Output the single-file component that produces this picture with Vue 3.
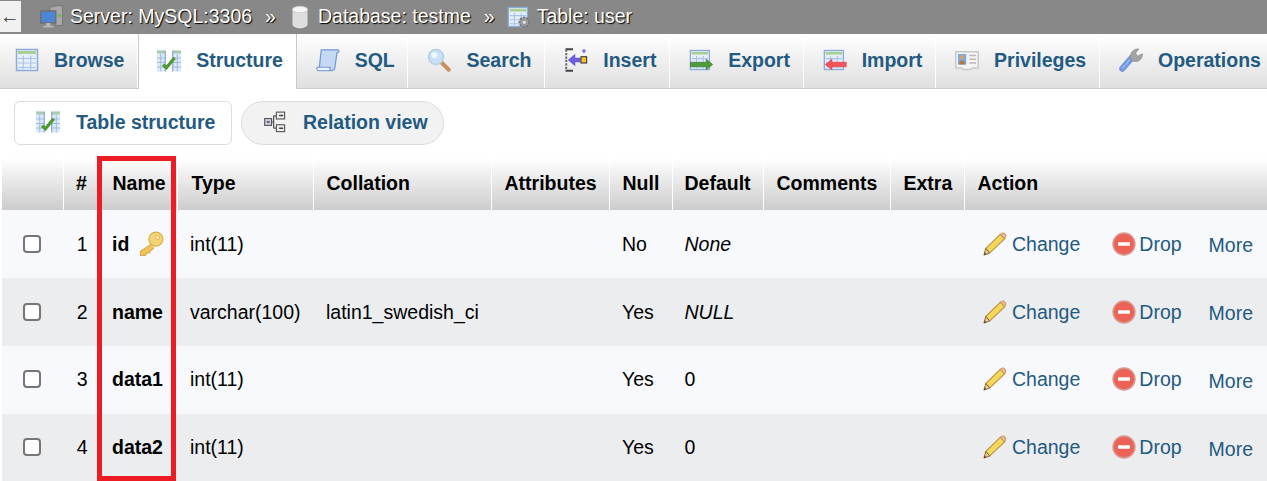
<script setup>
const tabs = [
  { label: 'Browse', icon: 'browse' },
  { label: 'Structure', icon: 'structure', active: true },
  { label: 'SQL', icon: 'sql' },
  { label: 'Search', icon: 'search' },
  { label: 'Insert', icon: 'insert' },
  { label: 'Export', icon: 'export' },
  { label: 'Import', icon: 'import' },
  { label: 'Privileges', icon: 'privileges' },
  { label: 'Operations', icon: 'wrench' }
]

const columns = ['', '#', 'Name', 'Type', 'Collation', 'Attributes', 'Null', 'Default', 'Comments', 'Extra', 'Action']

const rows = [
  { n: 1, name: 'id', primary: true, type: 'int(11)', collation: '', nul: 'No', def: 'None', italic: true },
  { n: 2, name: 'name', type: 'varchar(100)', collation: 'latin1_swedish_ci', nul: 'Yes', def: 'NULL', italic: true },
  { n: 3, name: 'data1', type: 'int(11)', collation: '', nul: 'Yes', def: '0' },
  { n: 4, name: 'data2', type: 'int(11)', collation: '', nul: 'Yes', def: '0' }
]
</script>

<template>
  <div class="page">
    <!-- icon sprite -->
    <svg class="sprite" width="0" height="0">
      <defs>
        <symbol id="i-table" viewBox="0 0 16 16">
          <rect x="1" y="1" width="14" height="14" fill="#e6eefa" stroke="#8cadd9" />
          <rect x="2" y="2" width="12" height="2" fill="#a9cf92" />
          <path d="M2 7h12M2 10h12M2 13h12M5.5 5v9M10.500 5v9" stroke="#a9c3e6" stroke-width=".8" fill="none" />
        </symbol>
        <symbol id="i-browse" viewBox="0 0 16 16">
          <use href="#i-table" width="16" height="16" />
        </symbol>
        <symbol id="i-structure" viewBox="0 0 16 16">
          <path d="M0 1h5.500v14H0zM10.500 1H16v14h-5.500z" fill="#dfeaf8" />
          <path d="M0 1h5.500v2H0zM10.500 1H16v2h-5.500z" fill="#a9cbb0" />
          <path d="M0 6h5.500M0 9h5.500M0 12h5.500M10.500 6H16M10.500 9H16M10.500 12H16M2.500 3v12M13.500 3v12" stroke="#9dbbe2" stroke-width=".7" />
          <path d="M5.500 1v14M10.500 1v14" stroke="#8cadd9" stroke-width=".9" />
          <path d="M4 10.500 6.300 12.500 11.800 5.800" fill="none" stroke="#4f9a2f" stroke-width="2.200" />
        </symbol>
        <symbol id="i-sql" viewBox="0 0 16 16">
          <path d="M3.500 1.200H14.500c1 0 1.300 1.800-.5 2L12.500 13.500c-.2 1-1 1.500-2 1.500H2z" fill="#c5d9f5" stroke="#6f97d0" stroke-width=".8" />
          <path d="M1.500 15.200c-1-.4-1.200-1.500-.8-2.400H9.500c-.4 1-.2 1.900.6 2.400z" fill="#eef4fc" stroke="#6f97d0" stroke-width=".7" />
        </symbol>
        <symbol id="i-search" viewBox="0 0 16 16">
          <path d="m9.500 9.500 5 5" stroke="#c8925c" stroke-width="2.600" stroke-linecap="round" />
          <circle cx="6" cy="6" r="5" fill="#c9e0f7" stroke="#b5cde2" />
          <circle cx="4.800" cy="4.600" r="2" fill="#eef6fd" />
        </symbol>
        <symbol id="i-insert" viewBox="0 0 16 16">
          <path d="M1 .8h5M1 15.200h5" stroke="#444" stroke-width="1.300" />
          <path d="M1.500 1v14" stroke="#666" stroke-width="1.300" stroke-dasharray="1.500 .8" />
          <path d="M2.500 8 7.500 3.800v2.700H11v3H7.500v2.700z" fill="#6a5fd8" />
          <rect x="11.300" y="5.800" width="3.800" height="4.200" fill="#f2c230" stroke="#333" stroke-width=".7" />
          <path d="M12 2h2.600M13.300 .7v2.600" stroke="#7a70e0" stroke-width="1" />
        </symbol>
        <symbol id="i-export" viewBox="0 0 16 16">
          <use href="#i-table" width="14.500" height="16" />
          <path d="M1 9.500h10.500V7.500L15.800 11l-4.300 3.500v-2H1z" fill="#4f9a3a" stroke="#3a7a2b" stroke-width=".4" />
        </symbol>
        <symbol id="i-import" viewBox="0 0 16 16">
          <use href="#i-table" width="14.500" height="16" />
          <path d="M15.500 9.500H6V7.500L1.500 11 6 14.500v-2h9.500z" fill="#f0545a" stroke="#e03a40" stroke-width=".4" />
        </symbol>
        <symbol id="i-privileges" viewBox="0 0 16 16">
          <path d="M.5 2.500h15v10.800h-4l-1 1H5.500l-1-1h-4z" fill="#f4f4f4" stroke="#c8c8c8" />
          <rect x="2" y="4" width="5.500" height="7" fill="#7aa8e0" />
          <circle cx="4.700" cy="6.200" r="1.500" fill="#d9a066" />
          <path d="M2.800 11c0-2 1-2.600 1.900-2.600s1.900.6 1.900 2.600z" fill="#b5763c" />
          <path d="M9.500 5h4.500M9.500 7.500h4.500M9.500 10h4.500" stroke="#b9b9b9" stroke-width="1" />
        </symbol>
        <symbol id="i-wrench" viewBox="0 0 16 16">
          <path d="M2.300 13.700 8.500 6.500" stroke="#6f97de" stroke-width="4.200" stroke-linecap="round" />
          <path d="M2.300 13.500 7 8" stroke="#9ab8ea" stroke-width="1" stroke-linecap="round" />
          <path d="M8 7.800C7 4.500 8.500 1.200 12 .7h1.200L11 3.500l1.500 2 3-1.700C16 7 13 9.800 9.500 8.800z" fill="#a3a3a3" stroke="#8b8b8b" stroke-width=".5" />
        </symbol>
        <symbol id="i-server" viewBox="0 0 16 16">
          <path d="M6 1.500 11 .5h4v13l-4 .5z" fill="#a8a8a8" stroke="#6e6e6e" stroke-width=".5" />
          <rect x="12" y="6" width="2" height="2" fill="#5fc05a" />
          <rect x=".5" y="4" width="10" height="8" fill="#4d86d6" stroke="#6f6f6f" />
          <path d="M4 12h3v2h2v1H2v-1h2z" fill="#b5b5b5" />
        </symbol>
        <symbol id="i-db" viewBox="0 0 16 16">
          <path d="M3 3v10c0 1.300 2.200 2.500 5 2.500s5-1.200 5-2.500V3z" fill="#dedede" />
          <ellipse cx="8" cy="3" rx="5" ry="2.200" fill="#f6f6f6" stroke="#c9c9c9" stroke-width=".5" />
        </symbol>
        <symbol id="i-tableops" viewBox="0 0 16 16">
          <use href="#i-table" width="14.500" height="16" />
          <circle cx="11.500" cy="11.500" r="3.200" fill="#9a9a9a" stroke="#777" stroke-width="1.200" stroke-dasharray="1.500 .8" />
          <circle cx="11.500" cy="11.500" r="1" fill="#e6e6e6" />
        </symbol>
        <symbol id="i-relation" viewBox="0 0 16 16">
          <path d="M4 8h3M7 3.500v9M7 3.500h2M7 12.500h2" stroke="#555" stroke-width=".9" fill="none" />
          <rect x=".5" y="5.500" width="5" height="5" fill="#cfc8ea" stroke="#555" stroke-width=".8" />
          <rect x="9" y=".8" width="6" height="5" fill="#efefef" stroke="#555" stroke-width=".8" />
          <rect x="9" y="10" width="6" height="5" fill="#efefef" stroke="#555" stroke-width=".8" />
          <path d="M2 8h2M11 3.300h3M11 12.500h3" stroke="#444" stroke-width="1" />
        </symbol>
        <symbol id="i-key" viewBox="0 0 16 16">
          <path d="M8.500 8 1.500 12.500v2.500h3l1-1.500H7l.8-1.500 2-1.500" fill="#eec65c" stroke="#d8ad4a" stroke-width=".7" />
          <circle cx="11" cy="5" r="4.300" fill="#f3d472" stroke="#d8ad4a" stroke-width=".7" />
          <circle cx="12" cy="4" r="1.200" fill="#fff0b5" stroke="#d8ad4a" stroke-width=".5" />
        </symbol>
        <symbol id="i-pencil" viewBox="0 0 16 16">
          <path d="M11.500 1.500 14.500 4.500 4.500 14 1.800 11z" fill="#f3d95a" stroke="#c3954a" stroke-width=".8" />
          <path d="M11.500 1.500 13.200 .6c.8-.2 2.200 1.200 2 2l-.7 1.900z" fill="#e8b7a0" stroke="#c3954a" stroke-width=".6" />
          <path d="M1.800 11 .6 15.400 4.500 14z" fill="#e3c79a" stroke="#8a6430" stroke-width=".6" />
          <path d="M.6 15.400 1.100 13.600 2.400 14.900z" fill="#5a3d1a" />
        </symbol>
        <symbol id="i-drop" viewBox="0 0 16 16">
          <circle cx="8" cy="8" r="7.300" fill="#ec6257" stroke="#d99a92" />
          <rect x="4" y="6.800" width="8" height="2.400" rx=".5" fill="#fff" />
        </symbol>
      </defs>
    </svg>

    <div class="topbar">
      <span class="back">←</span>
      <svg class="crumb-icon server"><use href="#i-server" /></svg>
      <span class="crumb">Server: MySQL:3306</span>
      <span class="sep">»</span>
      <svg class="crumb-icon db"><use href="#i-db" /></svg>
      <span class="crumb">Database: testme</span>
      <span class="sep">»</span>
      <svg class="crumb-icon"><use href="#i-tableops" /></svg>
      <span class="crumb">Table: user</span>
    </div>

    <nav class="tabs">
      <a v-for="tab in tabs" :key="tab.label" class="tab" :class="{ active: tab.active }">
        <svg class="tab-icon"><use :href="'#i-' + tab.icon" /></svg>
        <span>{{ tab.label }}</span>
      </a>
    </nav>

    <div class="subtabs">
      <a class="subtab current">
        <svg class="sub-icon"><use href="#i-structure" /></svg>
        <span>Table structure</span>
      </a>
      <a class="subtab pill">
        <svg class="sub-icon small"><use href="#i-relation" /></svg>
        <span>Relation view</span>
      </a>
    </div>

    <div class="table-wrap">
      <table class="structure">
        <colgroup>
          <col class="c-check" /><col class="c-num" /><col class="c-name" /><col class="c-type" />
          <col class="c-coll" /><col class="c-attr" /><col class="c-null" /><col class="c-def" />
          <col class="c-comm" /><col class="c-extra" /><col />
        </colgroup>
        <thead>
          <tr>
            <th v-for="col in columns" :key="col">{{ col }}</th>
          </tr>
        </thead>
        <tbody>
          <tr v-for="row in rows" :key="row.n">
            <td class="check"><span class="box"></span></td>
            <td class="num">{{ row.n }}</td>
            <td class="name">
              <div class="name-in">
                {{ row.name }}
                <svg v-if="row.primary" class="key"><use href="#i-key" /></svg>
              </div>
            </td>
            <td>{{ row.type }}</td>
            <td>{{ row.collation }}</td>
            <td></td>
            <td>{{ row.nul }}</td>
            <td :class="{ em: row.italic }">{{ row.def }}</td>
            <td></td>
            <td></td>
            <td class="actions">
              <div class="action-row">
                <a class="act change"><svg class="act-icon"><use href="#i-pencil" /></svg>Change</a>
                <a class="act drop"><svg class="act-icon"><use href="#i-drop" /></svg>Drop</a>
                <a class="act more">More</a>
              </div>
            </td>
          </tr>
        </tbody>
      </table>
      <!-- red highlight drawn over the Name column -->
      <div class="highlight"></div>
    </div>
  </div>
</template>

<style>
html, body {
  margin: 0;
  overflow: hidden;
  background: #fff;
}
</style>

<style scoped>
.page {
  width: 1267px;
  height: 481px;
  overflow: hidden;
  font-family: "Liberation Sans", Arial, sans-serif;
  font-size: 19.5px;
  color: #000;
}

.sprite {
  display: block;
}

/* the originals are upscaled bitmaps, so soften the icons a little */
.crumb-icon, .tab-icon, .sub-icon, .key, .act-icon {
  filter: blur(.35px);
}

/* --- top breadcrumb --- */
.topbar {
  display: flex;
  align-items: center;
  height: 34px;
  padding-bottom: 1px;
  box-sizing: border-box;
  background: #888;
  color: #fff;
  text-shadow: 1px 1px 1px #000;
}
.back {
  width: 21px;
  height: 31px;
  flex: none;
  background: #f1f1f1;
  color: #333;
  line-height: 31px;
  text-shadow: none;
  margin-right: 19px;
}
.crumb-icon {
  width: 24px;
  height: 24px;
  flex: none;
  margin-right: 6px;
}
.crumb {
  white-space: nowrap;
}
.sep {
  margin: 0 12px 0 13px;
}

/* --- main tabs --- */
.tabs {
  display: flex;
  height: 55px;
  box-sizing: border-box;
  border-bottom: 1px solid #ccc;
  margin-left: -4px;
  white-space: nowrap;
}
.tab {
  display: flex;
  align-items: center;
  flex: none;
  padding: 0 12.75px 2px 19px;
  font-weight: 700;
  color: #235a81;
  background: linear-gradient(#fff, #dfdfdf);
  border-right: 1px solid #fff;
  box-shadow: 1px 0 0 #c9c9c9;
}
.tab.active {
  background: #fff;
  height: 55px;
  box-sizing: border-box;
  padding-left: 18px;
  border-left: 1px solid #c9c9c9;
  border-right: 1px solid #c9c9c9;
  box-shadow: none;
}
.tab-icon {
  width: 24px;
  height: 24px;
  margin-right: 15px;
  flex: none;
}

/* --- sub tabs --- */
.subtabs {
  display: flex;
  gap: 9px;
  margin: 12px 0 0 14px;
}
.subtab {
  display: flex;
  align-items: center;
  height: 44px;
  box-sizing: border-box;
  padding-bottom: 2px;
  border: 1px solid #ddd;
  color: #235a81;
  font-weight: 700;
  white-space: nowrap;
}
.current {
  width: 218px;
  padding-left: 21px;
  border-radius: 6px;
  background: #fff;
}
.pill {
  width: 203px;
  padding-left: 22px;
  border-radius: 22px;
  background: #f2f2f2;
}
.sub-icon {
  width: 24px;
  height: 24px;
  margin-right: 16px;
  flex: none;
}
.sub-icon.small {
  width: 22px;
  height: 22px;
  margin-right: 17px;
}

/* --- table --- */
.table-wrap {
  position: relative;
  height: 323px;
  margin: 13px 0 0 2px;
}
.structure {
  width: 1265px;
  table-layout: fixed;
  border-collapse: collapse;
}
.c-check { width: 61px; }
.c-num { width: 36px; }
.c-name { width: 78px; }
.c-type { width: 136px; }
.c-coll { width: 178px; }
.c-attr { width: 118px; }
.c-null { width: 63px; }
.c-def { width: 91px; }
.c-comm { width: 127px; }
.c-extra { width: 74px; }

th {
  height: 52px;
  padding: 0 0 2px 13px;
  text-align: left;
  font-weight: 700;
  white-space: nowrap;
  background: linear-gradient(#fff, #ccc);
  border-right: 1px solid #fff;
  box-sizing: border-box;
}
th:nth-child(8) {
  padding-left: 12px;
}
th:nth-child(2) {
  padding-left: 12.5px;
}
th:nth-child(4) {
  padding-left: 14px;
}
th:last-child {
  border-right: 0;
}
td {
  height: 68px;
  padding: 0 0 0 13px;
  box-sizing: border-box;
  white-space: nowrap;
  overflow: hidden;
}
/* last two rows sit one pixel higher in their band */
tbody tr:nth-child(n+3) td {
  padding-bottom: 2px;
}
tbody tr:nth-child(n+3) .more {
  padding-top: 4px;
}
tbody tr:nth-child(odd) td {
  background: #f8f9fc;
}
tbody tr:nth-child(even) td {
  background: #ecedef;
}
.check {
  padding-left: 21px;
}
.box {
  display: block;
  width: 18px;
  height: 18px;
  box-sizing: border-box;
  border: 2px solid #767676;
  border-radius: 4px;
  background: #fff;
}
td.num {
  padding-right: 11.5px;
  padding-left: 0;
  text-align: right;
}
.name {
  font-weight: 700;
}
.name-in {
  display: flex;
  align-items: center;
}
.key {
  width: 26px;
  height: 26px;
  margin-left: 9px;
  flex: none;
}
.em {
  font-style: italic;
}
td:nth-child(8) {
  padding-left: 12.5px;
}
td.actions {
  padding-left: 19px;
  overflow: visible;
}
.action-row {
  display: flex;
  align-items: center;
}
.act {
  display: flex;
  align-items: center;
  color: #235a81;
}
.act-icon {
  width: 24px;
  height: 24px;
  margin-right: 5px;
  flex: none;
}
.change {
  margin-right: 32px;
}
.drop {
  margin-right: 27px;
}
.drop .act-icon {
  margin-right: 3px;
}
.more {
  padding-top: 2px;
}

.highlight {
  position: absolute;
  left: 95px;
  top: -2px;
  bottom: 0;
  width: 79px;
  box-sizing: border-box;
  border: 5px solid #ed1c24;
}
</style>
